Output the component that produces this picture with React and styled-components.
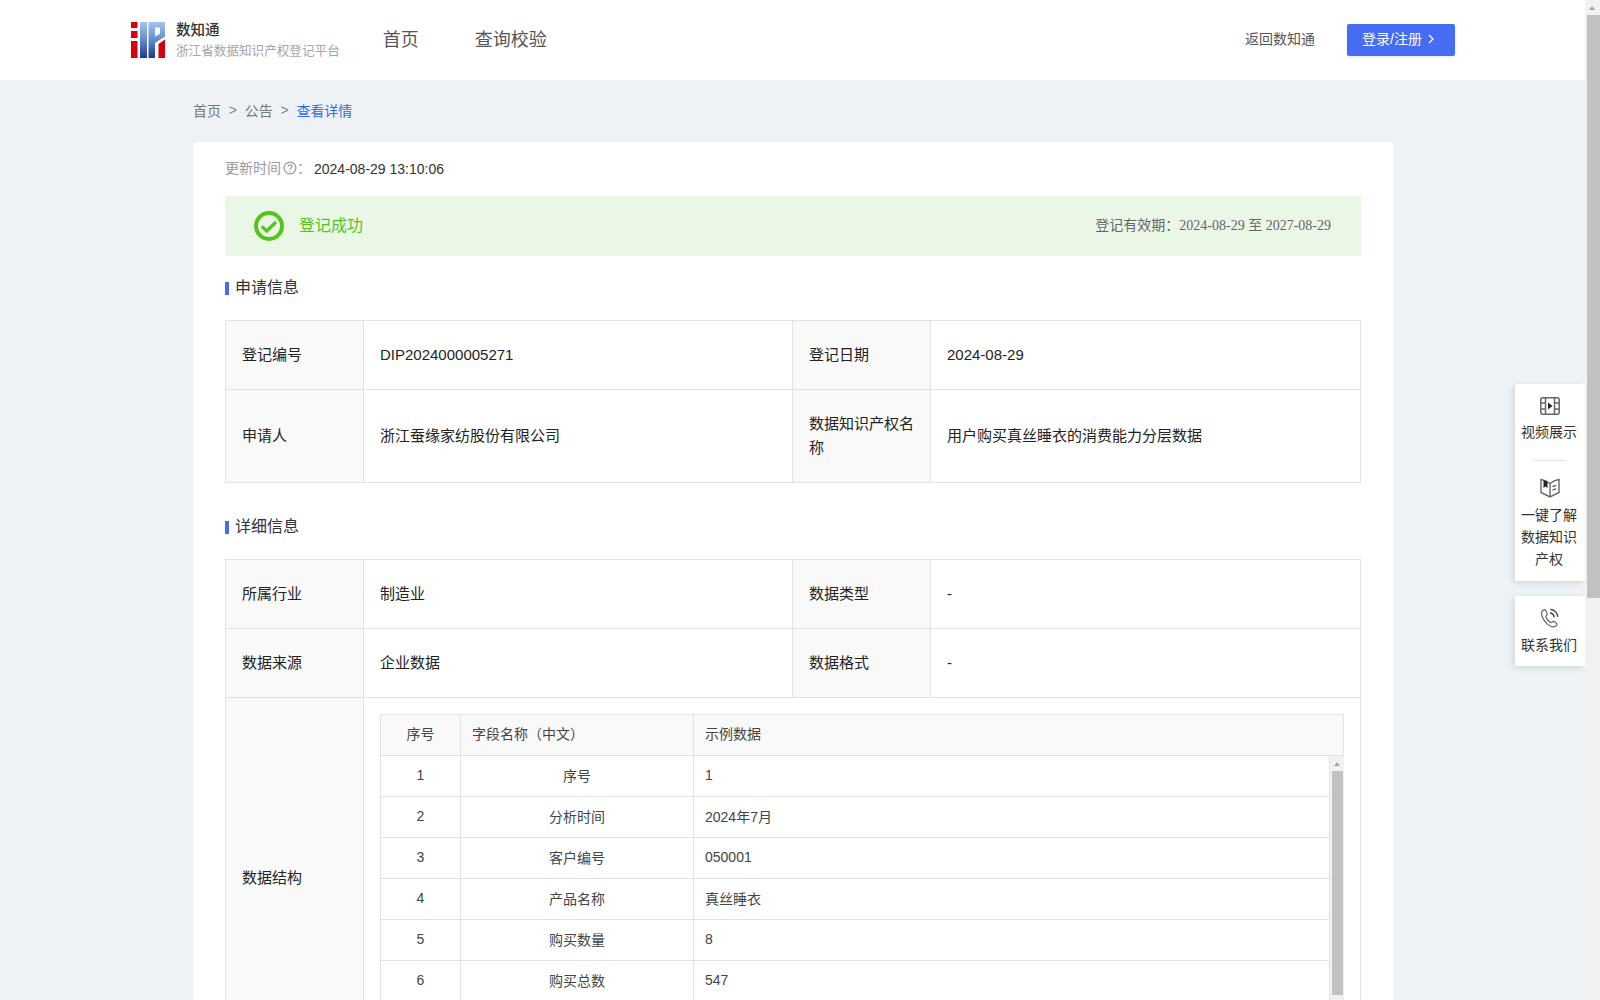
import React from "react";
import styled, { createGlobalStyle } from "styled-components";

const sans = `"Liberation Sans", "Noto Sans CJK SC", sans-serif`;
const serif = `"Liberation Serif", "Noto Sans CJK SC", serif`;

const fields = [
  ["1", "序号", "1"],
  ["2", "分析时间", "2024年7月"],
  ["3", "客户编号", "050001"],
  ["4", "产品名称", "真丝睡衣"],
  ["5", "购买数量", "8"],
  ["6", "购买总数", "547"],
];

const Logo = () => (
  <svg width="36" height="36" viewBox="0 0 36 36">
    <defs>
      <linearGradient id="lg" x1="0" y1="0" x2="0" y2="1">
        <stop offset="0" stopColor="#a4c5ee" />
        <stop offset="0.5" stopColor="#5f8ccd" />
        <stop offset="1" stopColor="#1d3b8e" />
      </linearGradient>
    </defs>
    <rect x="0" y="0" width="6.500" height="6" fill="#d9000d" />
    <rect x="0" y="9" width="6.500" height="7" fill="#d9000d" />
    <rect x="0" y="19" width="6.500" height="17" fill="#d9000d" />
    <rect x="9" y="0" width="7" height="36" fill="url(#lg)" />
    <path d="M17.500 0H34v14.500L24 21v15h-6.500zM24 5.500v9l5-2.800V5.500z" fill="url(#lg)" fillRule="evenodd" />
    <path d="M27.500 22L34 17.500V36h-6.500z" fill="#d9000d" />
  </svg>
);

const VideoIcon = () => (
  <svg width="20" height="18" viewBox="0 0 20 18" fill="none" stroke="#666" strokeWidth="1.500">
    <rect x="0.800" y="0.800" width="18.400" height="16.400" rx="2" />
    <path d="M5.500 .8v16.400M14.500 .8v16.400M.8 6h4.700M.8 12h4.700M14.500 6h4.700M14.500 12h4.700" />
    <path d="M8 5.500l4.500 3.500L8 12.500z" fill="#222" stroke="none" />
  </svg>
);

const BookIcon = () => (
  <svg width="20" height="20" viewBox="0 0 20 20" fill="none" stroke="#666" strokeWidth="1.400">
    <path d="M1 1.500c3.200.5 6.500 2 9 4 2.500-2 5.800-3.500 9-4v13L10 19l-9-4.500z" />
    <path d="M10 5.500V18" />
    <path d="M3.500 2.200l4 1.500v6.300L5.500 8.500 3.500 10z" fill="#222" stroke="none" />
    <path d="M12.500 8.500l3.800-1.200M12.500 12l3.800-1.200" />
  </svg>
);

const PhoneIcon = () => (
  <svg width="20" height="20" viewBox="0 0 20 20" fill="none" stroke="#666" strokeWidth="1.200" strokeLinecap="round">
    <path d="M5 1.600C3 2 1.200 3.500 1.600 6.200c.5 3.600 2.600 6.800 5.300 9.400 2.500 2.300 5 3.600 7.400 3.100 1.500-.3 2.600-1.400 2.700-2.400.1-.7-2.700-3-3.600-3-.8 0-1.200 1.400-2.200 1.400-1.600 0-5.300-4.500-5.300-6 0-1 1.400-1.500 1.300-2.400C7.100 5.400 5.700 1.500 5 1.600z" />
    <path d="M10.500 5c1.800.3 3.300 1.800 3.600 3.800M11 1.500c3.400.4 6.200 3.300 6.700 6.900" stroke="#444" strokeWidth="1.400" />
  </svg>
);

const App = () => (
  <Shell>
    <GlobalStyle />
    <Viewport>
      <Header>
        <Brand>
          <Logo />
          <BrandText>
            <BrandName>数知通</BrandName>
            <BrandSub>浙江省数据知识产权登记平台</BrandSub>
          </BrandText>
        </Brand>
        <Nav>
          <NavItem>首页</NavItem>
          <NavItem>查询校验</NavItem>
        </Nav>
        <HeaderRight>
          <BackLink>返回数知通</BackLink>
          <LoginBtn>
            登录/注册
            <svg width="6" height="10" viewBox="0 0 6 10" fill="none" stroke="#fff" strokeWidth="1.300">
              <path d="M1 1l4 4-4 4" />
            </svg>
          </LoginBtn>
        </HeaderRight>
      </Header>
      <Content>
        <Crumbs>
          <Crumb>首页</Crumb>
          <Sep>&gt;</Sep>
          <Crumb>公告</Crumb>
          <Sep>&gt;</Sep>
          <Crumb $active>查看详情</Crumb>
        </Crumbs>
        <Card>
          <UpdateRow>
            <UpdateLabel>更新时间</UpdateLabel>
            <svg width="14" height="14" viewBox="0 0 14 14" fill="none" stroke="#999" strokeWidth="1.200">
              <circle cx="7" cy="7" r="5.900" />
              <path d="M5.200 5.500c0-2.300 3.700-2.300 3.700 0 0 1.500-1.900 1.300-1.900 2.900" />
              <circle cx="7" cy="10.300" r=".7" fill="#999" stroke="none" />
            </svg>
            <UpdateLabel>：</UpdateLabel>
            <UpdateValue>2024-08-29 13:10:06</UpdateValue>
          </UpdateRow>
          <Banner>
            <BannerStatus>
              <svg width="30" height="30" viewBox="0 0 30 30" fill="none" stroke="#52c41a">
                <circle cx="15" cy="15" r="13" strokeWidth="4" />
                <path d="M7.700 15.300l5 4.700 9.300-9" strokeWidth="3.200" />
              </svg>
              <StatusText>登记成功</StatusText>
            </BannerStatus>
            <Validity>登记有效期：2024-08-29 至 2027-08-29</Validity>
          </Banner>

          <SectionTitle>申请信息</SectionTitle>
          <InfoGrid>
            <Label>登记编号</Label>
            <Value>DIP2024000005271</Value>
            <Label>登记日期</Label>
            <Value>2024-08-29</Value>
            <Label>申请人</Label>
            <Value $tall>浙江蚕缘家纺股份有限公司</Value>
            <Label>数据知识产权名称</Label>
            <Value $tall>用户购买真丝睡衣的消费能力分层数据</Value>
          </InfoGrid>

          <SectionTitle $second>详细信息</SectionTitle>
          <InfoGrid>
            <Label>所属行业</Label>
            <Value>制造业</Value>
            <Label>数据类型</Label>
            <Value>-</Value>
            <Label>数据来源</Label>
            <Value>企业数据</Value>
            <Label>数据格式</Label>
            <Value>-</Value>
            <Label>数据结构</Label>
            <StructureCell>
              <FieldHead>
                <HeadCell $center>序号</HeadCell>
                <HeadCell>字段名称（中文）</HeadCell>
                <HeadCell>示例数据</HeadCell>
              </FieldHead>
              <FieldBody>
                <FieldRows>
                  {fields.map(([no, name, sample]) => (
                    <FieldRow key={no}>
                      <RowCell $center>{no}</RowCell>
                      <RowCell $center>{name}</RowCell>
                      <RowCell>{sample}</RowCell>
                    </FieldRow>
                  ))}
                </FieldRows>
                <InnerRail>
                  <RailArrow />
                  <InnerThumb />
                </InnerRail>
              </FieldBody>
            </StructureCell>
          </InfoGrid>
        </Card>
      </Content>
      <SideDock>
        <DockGroup $top={13} $bottom={11}>
          <DockItem>
            <VideoIcon />
            <DockText>视频展示</DockText>
          </DockItem>
          <DockDivider />
          <DockItem>
            <BookIcon />
            <DockText>一键了解数据知识产权</DockText>
          </DockItem>
        </DockGroup>
        <DockGroup $top={12} $bottom={10}>
          <DockItem>
            <PhoneIcon />
            <DockText>联系我们</DockText>
          </DockItem>
        </DockGroup>
      </SideDock>
    </Viewport>
    <PageRail>
      <RailArrow />
      <PageThumb />
    </PageRail>
  </Shell>
);

export default App;

const GlobalStyle = createGlobalStyle`
  html, body {
    margin: 0;
    height: 100%;
    overflow: hidden;
  }
  body {
    background: #eef2f5;
    font-family: ${sans};
    color: #333;
  }
  * {
    box-sizing: border-box;
  }
`;

const Shell = styled.div`
  display: flex;
  height: 1000px;
  overflow: hidden;
`;

const Viewport = styled.div`
  position: relative;
  flex: 1;
  min-width: 0;
  overflow: hidden;
`;

const PageRail = styled.div`
  width: 15px;
  flex: none;
  background: #f1f1f1;
  padding-left: 2px;
`;

const RailArrow = styled.div`
  width: 0;
  height: 0;
  margin: 6px 0 5px 2px;
  border-left: 3.5px solid transparent;
  border-right: 3.5px solid transparent;
  border-bottom: 4px solid #a3a3a3;
`;

const PageThumb = styled.div`
  width: 13px;
  height: 583px;
  background: #c1c1c1;
`;

const Header = styled.header`
  display: flex;
  align-items: center;
  height: 80px;
  padding: 0 130px 0 131px;
  background: #fff;
`;

const Brand = styled.div`
  display: flex;
  align-items: center;
  gap: 9px;
`;

const BrandText = styled.div`
  display: flex;
  flex-direction: column;
`;

const BrandName = styled.div`
  font-size: 14.5px;
  line-height: 20px;
  font-weight: 500;
  color: #333;
`;

const BrandSub = styled.div`
  margin-top: 2px;
  font-size: 12.6px;
  line-height: 18px;
  color: #a5a5a5;
`;

const Nav = styled.nav`
  display: flex;
  gap: 56px;
  margin-left: 43px;
`;

const NavItem = styled.a`
  font-size: 18px;
  line-height: 24px;
  color: #555;
`;

const HeaderRight = styled.div`
  display: flex;
  align-items: center;
  gap: 32px;
  margin-left: auto;
`;

const BackLink = styled.a`
  padding-bottom: 4px;
  font-size: 14px;
  color: #555;
`;

const LoginBtn = styled.button`
  display: flex;
  align-items: center;
  gap: 6px;
  width: 108px;
  height: 32px;
  padding: 0 0 5px 15px;
  border: 0;
  border-radius: 2px;
  background: #456cf2;
  box-shadow: 0 1px 3px rgba(69, 108, 242, 0.15);
  color: #fff;
  font-family: ${sans};
  font-size: 14px;

  svg {
    margin-top: 3px;
  }
`;

const Content = styled.main`
  width: 1200px;
  margin-left: 193px;
`;

const Crumbs = styled.div`
  display: flex;
  align-items: center;
  gap: 7.75px;
  height: 62px;
  padding-bottom: 3px;
  font-size: 14px;
`;

const Crumb = styled.span`
  color: ${({ $active }) => ($active ? "#2f6bf0" : "#777")};
`;

const Sep = styled.span`
  color: #888;
`;

const Card = styled.section`
  padding: 17px 32px 40px;
  border-radius: 4px;
  background: #fff;
`;

const UpdateRow = styled.div`
  display: flex;
  align-items: center;
  height: 18px;
  font-size: 14px;
`;

const UpdateLabel = styled.span`
  margin-right: 2px;
  padding-bottom: 2px;
  color: #999;
`;

const UpdateValue = styled.span`
  margin: 1px 0 0 1px;
  color: #333;
`;

const Banner = styled.div`
  display: flex;
  align-items: center;
  justify-content: space-between;
  height: 60px;
  margin-top: 19px;
  padding: 0 29px;
  background: #ebf7e6;
`;

const BannerStatus = styled.div`
  display: flex;
  align-items: center;
  gap: 15px;
`;

const StatusText = styled.span`
  padding-bottom: 4px;
  font-size: 16px;
  color: #52c41a;
`;

const Validity = styled.span`
  padding-bottom: 4px;
  margin-right: 1px;
  font-family: ${serif};
  font-size: 14px;
  color: #666;
`;

const SectionTitle = styled.h3`
  display: flex;
  align-items: center;
  gap: 6px;
  height: 24px;
  margin: ${({ $second }) => ($second ? "31px 0 21px" : "19px 0 21px")};
  padding-top: 1px;
  font-size: 16px;
  font-weight: 400;
  line-height: 24px;
  color: #333;

  &::before {
    content: "";
    width: 4px;
    height: 13px;
    margin-top: 2px;
    background: #456cf2;
  }
`;

const InfoGrid = styled.div`
  display: grid;
  grid-template-columns: 138px 429px 138px 1fr;
  border-top: 1px solid #e2e2e2;
  border-left: 1px solid #e2e2e2;
`;

const Label = styled.div`
  display: flex;
  align-items: center;
  min-height: 69px;
  padding: 0 16px 1px;
  border-right: 1px solid #e2e2e2;
  border-bottom: 1px solid #e2e2e2;
  background: #f9f9f9;
  font-size: 15px;
  line-height: 24px;
  color: #222;
`;

const Value = styled(Label)`
  background: #fff;
  min-height: ${({ $tall }) => ($tall ? "93px" : "69px")};
`;

const StructureCell = styled.div`
  grid-column: 2 / 5;
  height: 362px;
  padding: 16px 16px 0;
  border-right: 1px solid #e2e2e2;
`;

const FieldHead = styled.div`
  display: grid;
  grid-template-columns: 80px 233px 1fr;
  height: 42px;
  padding-bottom: 1px;
  border: 1px solid #e2e2e2;
  background: #f9f9f9;
`;

const HeadCell = styled.div`
  display: flex;
  align-items: center;
  justify-content: ${({ $center }) => ($center ? "center" : "flex-start")};
  padding: 0 11px 4px;
  border-right: 1px solid #e2e2e2;
  font-size: 14px;
  color: #444;
  &:last-child {
    border-right: 0;
  }
`;

const FieldBody = styled.div`
  display: flex;
  border-left: 1px solid #e2e2e2;
`;

const FieldRows = styled.div`
  flex: 1;
  min-width: 0;
`;

const FieldRow = styled.div`
  display: grid;
  grid-template-columns: 80px 233px 1fr;
  height: 41px;
  border-bottom: 1px solid #e2e2e2;
`;

const RowCell = styled.div`
  display: flex;
  align-items: center;
  justify-content: ${({ $center }) => ($center ? "center" : "flex-start")};
  padding: 0 11px 3px;
  border-right: 1px solid #e2e2e2;
  font-size: 14px;
  color: #444;
  &:last-child {
    border-right: 0;
  }
`;

const InnerRail = styled.div`
  width: 15px;
  flex: none;
  background: #f1f1f1;
  border-left: 1px solid #e2e2e2;
  padding-left: 2px;
`;

const InnerThumb = styled.div`
  width: 11px;
  height: 224px;
  background: #c1c1c1;
`;

const SideDock = styled.aside`
  position: absolute;
  top: 384px;
  right: 0;
  width: 70px;
  display: flex;
  flex-direction: column;
  gap: 15px;
`;

const DockGroup = styled.div`
  display: flex;
  flex-direction: column;
  align-items: center;
  padding: ${({ $top }) => $top}px 0 ${({ $bottom }) => $bottom}px;
  background: #fff;
  box-shadow: -2px 2px 6px rgba(0, 0, 0, 0.12);
`;

const DockItem = styled.div`
  display: flex;
  flex-direction: column;
  align-items: center;
  gap: 6px;
`;

const DockDivider = styled.div`
  width: 32px;
  height: 1px;
  margin: 17px 0;
  background: #e2e2e2;
`;

const DockText = styled.div`
  width: 56px;
  margin-right: 2px;
  font-size: 14px;
  line-height: 22px;
  text-align: center;
  color: #333;
`;
